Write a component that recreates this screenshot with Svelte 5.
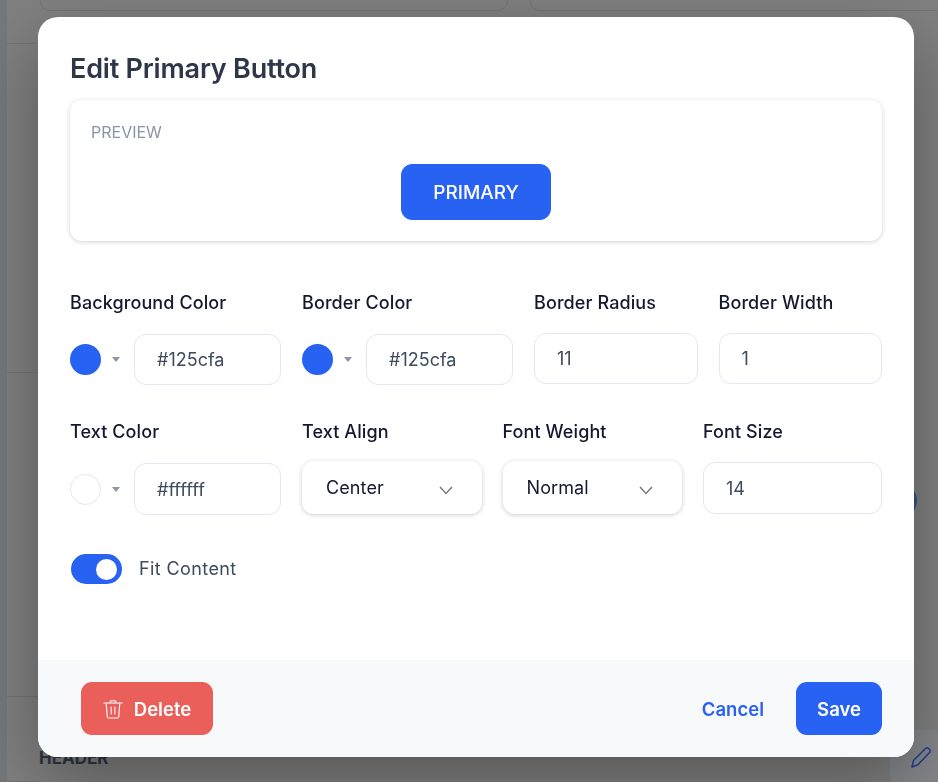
<script>
  let background = $state('#125cfa');
  let border = $state('#125cfa');
  let textColor = $state('#ffffff');
  let radius = $state(11);
  let borderWidth = $state(1);
  let fontSize = $state(14);
  let fit = $state(true);

  const leftRows = [44, 329, 324, 85];
  const rightRows = [44, 116, 43, 61, 51, 58, 78, 97, 20, 97, 32, 45];
</script>

{#snippet caret()}
  <svg class="caret" width="10" height="5" viewBox="0 0 10 5"><path d="M1 0h8L5 5z" fill="#8d96a5" /></svg>
{/snippet}

{#snippet chevron()}
  <svg class="chevron" width="16" height="10" viewBox="0 0 16 10" fill="none"><path d="M2 2l6 6.5L14 2" stroke="#777" stroke-width="1.4" /></svg>
{/snippet}

<div class="page">
  <div class="rail"></div>
  <div class="side-left">
    {#each leftRows as h}
      <div class="row" style="height: {h}px"></div>
    {/each}
  </div>
  <div class="middle">
    <div class="top-cards">
      <div class="top-card"></div>
      <div class="top-card"></div>
    </div>
    <div class="header-label">HEADER</div>
  </div>
  <div class="side-right">
    {#each rightRows as h}
      <div class="row" style="height: {h}px"></div>
    {/each}
  </div>
  <span class="blue-dot"></span>
  <span class="pencil-card">
    <svg width="24" height="24" viewBox="0 0 24 24" fill="none"><path d="M3 22l1.500-6.500L16.500 3.500a2 2 0 0 1 3 0l1 1a2 2 0 0 1 0 3L8.800 19.800z" stroke="#1f3f95" stroke-width="1.500" stroke-linejoin="round" /></svg>
  </span>
</div>

<div class="modal">
  <div class="modal-body">
    <h2>Edit Primary Button</h2>

    <section class="preview">
      <div class="preview-label">PREVIEW</div>
      <div class="preview-stage">
        <button class="preview-button" type="button">PRIMARY</button>
      </div>
    </section>

    <div class="fields first">
      <div class="field color-field">
        <span class="label">Background Color</span>
        <div class="color-row">
          <span class="swatch blue"></span>
          {@render caret()}
          <input class="text-input" bind:value={background} />
        </div>
      </div>
      <div class="field color-field">
        <span class="label">Border Color</span>
        <div class="color-row">
          <span class="swatch blue"></span>
          {@render caret()}
          <input class="text-input" bind:value={border} />
        </div>
      </div>
      <div class="field grow">
        <span class="label">Border Radius</span>
        <input class="text-input number" bind:value={radius} />
      </div>
      <div class="field grow">
        <span class="label">Border Width</span>
        <input class="text-input number" bind:value={borderWidth} />
      </div>
    </div>

    <div class="fields second">
      <div class="field color-field">
        <span class="label">Text Color</span>
        <div class="color-row">
          <span class="swatch white" style="background: {textColor}"></span>
          {@render caret()}
          <input class="text-input tall" bind:value={textColor} />
        </div>
      </div>
      <div class="field select-field">
        <span class="label">Text Align</span>
        <div class="select">Center {@render chevron()}</div>
      </div>
      <div class="field select-field">
        <span class="label">Font Weight</span>
        <div class="select">Normal {@render chevron()}</div>
      </div>
      <div class="field grow">
        <span class="label">Font Size</span>
        <input class="text-input number tall" bind:value={fontSize} />
      </div>
    </div>

    <div class="toggle-row">
      <button class="toggle" class:on={fit} type="button" aria-label="Fit Content" onclick={() => (fit = !fit)}>
        <span class="knob"></span>
      </button>
      <span class="toggle-label">Fit Content</span>
    </div>
  </div>

  <footer>
    <button class="delete" type="button">
      <svg width="20" height="20" viewBox="0 0 20 20" fill="none" stroke="#fff" stroke-width="1.100" stroke-linecap="round" stroke-linejoin="round">
        <path d="M1 4h18M7 4l.6-2.200h4.800L13 4M3.200 4l1.100 14a1.200 1.200 0 0 0 1.200 1h9a1.200 1.200 0 0 0 1.200-1L16.800 4M8.200 8v7M11.800 8v7" />
      </svg>
      Delete
    </button>
    <div class="footer-right">
      <button class="cancel" type="button">Cancel</button>
      <button class="save" type="button">Save</button>
    </div>
  </footer>
</div>

<style>
  :global(body) {
    margin: 0;
    font-family: Inter, "Noto Sans", sans-serif;
    overflow: hidden;
  }

  .page {
    position: relative;
    display: flex;
    height: 782px;
    overflow: hidden;
    background: #808080;
  }

  .rail {
    width: 7px;
    background: #777879;
    flex: none;
  }

  .side-left {
    width: 31px;
    flex: none;
  }

  .side-right {
    width: 24px;
    flex: none;
  }

  .row {
    box-sizing: border-box;
    border-bottom: 1px solid #737476;
  }

  .middle {
    flex: 1;
    position: relative;
  }

  .top-cards {
    display: flex;
    gap: 22px;
    margin: -20px 0 0 2px;
  }

  .top-card {
    flex: none;
    width: 468px;
    height: 31px;
    box-sizing: border-box;
    border: 1px solid #737476;
    border-radius: 10px;
  }

  .header-label {
    position: absolute;
    left: 1px;
    top: 748px;
    font-size: 17px;
    font-weight: 700;
    color: #2f3540;
  }

  .blue-dot {
    position: absolute;
    left: 880px;
    top: 482px;
    width: 37px;
    height: 37px;
    border-radius: 50%;
    background: #34508f;
  }

  .pencil-card {
    position: absolute;
    left: 890px;
    top: 730px;
    width: 60px;
    height: 60px;
    border-radius: 14px;
    background: #85878a;
    display: flex;
    align-items: flex-start;
    padding: 15px 0 0 19px;
    box-sizing: border-box;
  }

  .modal {
    position: fixed;
    left: 38px;
    top: 17px;
    width: 876px;
    height: 740px;
    display: flex;
    flex-direction: column;
    background: #fff;
    border-radius: 20px;
    overflow: hidden;
    box-shadow: 0 25px 70px rgba(0, 0, 0, 0.33);
  }

  .modal-body {
    flex: 1;
    padding: 34px 32px 0;
  }

  h2 {
    margin: 0 0 13px;
    font-size: 27px;
    line-height: 36px;
    font-weight: 600;
    color: #2d3748;
    letter-spacing: -0.2px;
  }

  .preview {
    height: 141px;
    box-sizing: border-box;
    padding: 22px 21px;
    border-radius: 12px;
    box-shadow: 0 1px 5px rgba(0, 0, 0, 0.18);
  }

  .preview-label {
    font-size: 16px;
    line-height: 20px;
    font-weight: 400;
    color: #8a94a6;
  }

  .preview-stage {
    display: flex;
    justify-content: center;
    margin-top: 22px;
  }

  .preview-button {
    width: 150px;
    height: 56px;
    border: 1px solid #2862f3;
    border-radius: 11px;
    background: #2862f3;
    color: #fff;
    font: 500 19px Inter, sans-serif;
  }

  .fields {
    display: flex;
    gap: 21px;
  }

  .fields.first {
    margin-top: 50px;
  }

  .fields.second {
    margin-top: 35px;
  }

  .field {
    display: flex;
    flex-direction: column;
    gap: 18px;
  }

  .label {
    font-size: 18px;
    line-height: 24px;
    font-weight: 500;
    letter-spacing: 0.1px;
    color: #14182e;
    white-space: nowrap;
  }

  .color-field {
    width: 211px;
    flex: none;
  }

  .grow {
    flex: 1;
    min-width: 0;
  }

  .select-field {
    width: 179.500px;
    flex: none;
  }

  .color-row {
    display: flex;
    align-items: center;
    margin-top: 1px;
  }

  .swatch {
    box-sizing: border-box;
    width: 31px;
    height: 31px;
    border-radius: 50%;
    flex: none;
  }

  .swatch.blue {
    background: #2862f3;
  }

  .swatch.white {
    border: 1px solid #e2e8f0;
  }

  .caret {
    margin: 0 13px 0 10px;
    flex: none;
  }

  .text-input {
    box-sizing: border-box;
    width: 147px;
    height: 51px;
    padding: 0 22px;
    border: 1px solid #e2e8f0;
    border-radius: 12px;
    outline: none;
    background: #fff;
    color: #3d4a5c;
    font: 400 18px Inter, sans-serif;
  }

  .text-input.number {
    width: 100%;
  }

  .text-input.tall {
    height: 52px;
  }

  .select {
    box-sizing: border-box;
    height: 53px;
    margin-top: -1px;
    padding: 0 28px 0 24px;
    display: flex;
    align-items: center;
    justify-content: space-between;
    border-radius: 12px;
    background: #fff;
    box-shadow: 0 1px 5px rgba(0, 0, 0, 0.2);
    font-size: 18px;
    letter-spacing: 0.1px;
    color: #14182e;
  }

  .chevron {
    margin-top: 5px;
  }

  .toggle-row {
    display: flex;
    align-items: center;
    gap: 17px;
    margin: 39px 0 0 1px;
  }

  .toggle {
    width: 51px;
    height: 30px;
    padding: 0 0 0 4px;
    border: none;
    border-radius: 15px;
    background: #cbd5e0;
    display: flex;
    align-items: center;
  }

  .toggle.on {
    background: #2862f3;
    justify-content: flex-end;
    padding: 0 5px 0 0;
  }

  .knob {
    width: 21px;
    height: 21px;
    border-radius: 50%;
    background: #fff;
  }

  .toggle-label {
    margin-top: -1px;
    font-size: 18px;
    letter-spacing: 0.4px;
    color: #3d4a5c;
  }

  footer {
    height: 97px;
    box-sizing: border-box;
    flex: none;
    padding: 22px 32px 0 43px;
    display: flex;
    justify-content: space-between;
    align-items: flex-start;
    background: #f8f9fb;
  }

  footer button {
    height: 53px;
    border: none;
    border-radius: 11px;
    font: 600 18.500px Inter, sans-serif;
  }

  .delete {
    width: 132px;
    display: flex;
    align-items: center;
    justify-content: center;
    gap: 11px;
    background: #eb5f5a;
    color: #fff;
  }

  .footer-right {
    display: flex;
    align-items: center;
    gap: 32px;
  }

  .cancel {
    padding: 0;
    background: none;
    color: #2862f3;
  }

  .save {
    width: 86px;
    background: #2862f3;
    color: #fff;
  }
</style>
